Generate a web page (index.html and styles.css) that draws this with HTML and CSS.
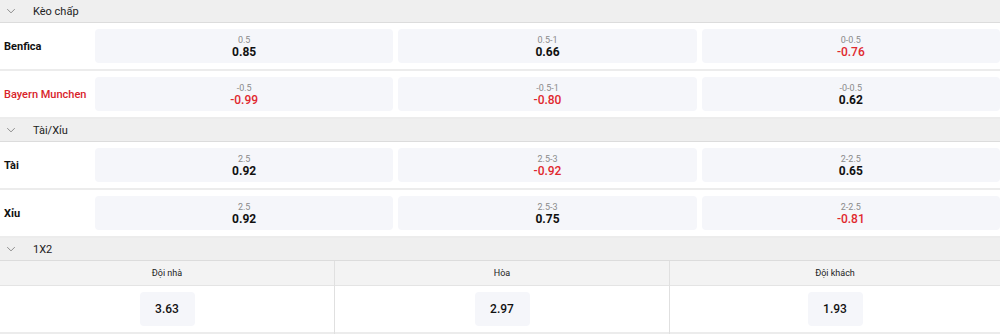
FILE: index.html
```html
<!DOCTYPE html>
<html lang="vi">
<head>
<meta charset="utf-8">
<link rel="stylesheet" href="styles.css">
</head>
<body>
<div class="market">
  <div class="mhead"><svg class="chev" viewBox="0 0 12 8" width="10" height="6"><path d="M1 1.5 L6 6.5 L11 1.5" fill="none" stroke="#777" stroke-width="1.1"/></svg><span>Kèo chấp</span></div>
  <div class="row">
    <div class="team">Benfica</div>
    <div class="cell"><span class="line">0.5</span><span class="odd">0.85</span></div>
    <div class="cell"><span class="line">0.5-1</span><span class="odd">0.66</span></div>
    <div class="cell"><span class="line">0-0.5</span><span class="odd neg">-0.76</span></div>
  </div>
  <div class="row">
    <div class="team red">Bayern Munchen</div>
    <div class="cell"><span class="line">-0.5</span><span class="odd neg">-0.99</span></div>
    <div class="cell"><span class="line">-0.5-1</span><span class="odd neg">-0.80</span></div>
    <div class="cell"><span class="line">-0-0.5</span><span class="odd">0.62</span></div>
  </div>
</div>
<div class="market">
  <div class="mhead"><svg class="chev" viewBox="0 0 12 8" width="10" height="6"><path d="M1 1.5 L6 6.5 L11 1.5" fill="none" stroke="#777" stroke-width="1.1"/></svg><span>Tài/Xỉu</span></div>
  <div class="row">
    <div class="team">Tài</div>
    <div class="cell"><span class="line">2.5</span><span class="odd">0.92</span></div>
    <div class="cell"><span class="line">2.5-3</span><span class="odd neg">-0.92</span></div>
    <div class="cell"><span class="line">2-2.5</span><span class="odd">0.65</span></div>
  </div>
  <div class="row">
    <div class="team">Xỉu</div>
    <div class="cell"><span class="line">2.5</span><span class="odd">0.92</span></div>
    <div class="cell"><span class="line">2.5-3</span><span class="odd">0.75</span></div>
    <div class="cell"><span class="line">2-2.5</span><span class="odd neg">-0.81</span></div>
  </div>
</div>
<div class="market">
  <div class="mhead"><svg class="chev" viewBox="0 0 12 8" width="10" height="6"><path d="M1 1.5 L6 6.5 L11 1.5" fill="none" stroke="#777" stroke-width="1.1"/></svg><span>1X2</span></div>
  <div class="x12">
    <div class="col">
      <div class="colhead">Đội nhà</div>
      <div class="colbody"><div class="btn">3.63</div></div>
    </div>
    <div class="col">
      <div class="colhead">Hòa</div>
      <div class="colbody"><div class="btn">2.97</div></div>
    </div>
    <div class="col">
      <div class="colhead">Đội khách</div>
      <div class="colbody"><div class="btn">1.93</div></div>
    </div>
  </div>
</div>
</body>
</html>
```
FILE: styles.css
```css
html, body {
  margin: 0;
  padding: 0;
  background: #fff;
}
body {
  font-family: Roboto, "Liberation Sans", Arial, sans-serif;
  color: #111;
  width: 1000px;
  overflow: hidden;
}
.mhead {
  height: 22px;
  background: #efefef;
  border-bottom: 1px solid #dcdcdc;
  display: flex;
  align-items: center;
  font-size: 11px;
  color: #222;
}
.chev {
  margin-left: 6px;
  margin-right: 17px;
}
.row {
  display: flex;
  align-items: center;
  gap: 5px;
  padding: 6px 0;
  border-bottom: 2px solid #ececec;
}
.team {
  width: 86px;
  padding-left: 4px;
  font-size: 11px;
  font-weight: 700;
  color: #111;
}
.team.red {
  color: #d8232a;
  font-weight: 500;
}
.cell {
  flex: 1;
  height: 34px;
  background: #f5f6fa;
  border-radius: 4px;
  display: flex;
  flex-direction: column;
  align-items: center;
  justify-content: center;
}
.line {
  font-size: 9px;
  color: #8a8a8a;
  line-height: 10px;
  margin-top: 2px;
}
.odd {
  font-size: 12px;
  font-weight: 700;
  color: #111;
  line-height: 14px;
}
.odd.neg {
  color: #e0282e;
  font-weight: 500;
}
.x12 {
  display: flex;
}
.col {
  width: 334px;
  flex: none;
  border-right: 1px solid #e0e0e0;
}
.col:last-child {
  flex: 1;
  border-right: none;
}
.colhead {
  height: 24px;
  background: #f3f3f3;
  border-bottom: 1px solid #e4e4e4;
  display: flex;
  align-items: center;
  justify-content: center;
  font-size: 9px;
  color: #222;
}
.colbody {
  height: 46px;
  display: flex;
  align-items: center;
  justify-content: center;
  border-bottom: 2px solid #ececec;
}
.btn {
  width: 55px;
  height: 34px;
  background: #f5f6fa;
  border-radius: 4px;
  display: flex;
  align-items: center;
  justify-content: center;
  font-size: 12px;
  font-weight: 500;
  color: #111;
}
```
